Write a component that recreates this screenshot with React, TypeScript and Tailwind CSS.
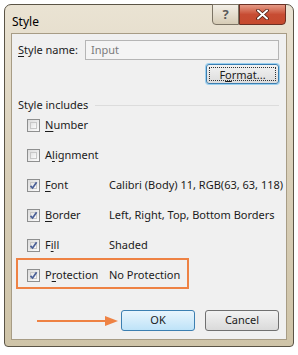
import React from "react";

const font = { fontFamily: '"Segoe UI", "Noto Sans", sans-serif' };

function Check({ checked }: { checked: boolean }) {
  return (
    <div className="w-[13px] h-[13px] border border-[#8e8f8f] bg-gradient-to-br from-[#dcdcdc] to-[#fbfbfb] p-[2px] shrink-0">
      <div className="w-full h-full border border-[#c8c8c8] bg-gradient-to-br from-[#e4e4e4] to-[#fafafa] flex items-center justify-center">
        {checked && (
          <svg width="9" height="9" viewBox="0 0 9 9" className="-m-[2px]">
            <path d="M1.5 4.8 L3.6 7 L7.6 1.2" fill="none" stroke="#4a5f97" strokeWidth="1.7" />
          </svg>
        )}
      </div>
    </div>
  );
}

function U({ children }: { children: React.ReactNode }) {
  return <span className="underline underline-offset-2">{children}</span>;
}

function Row({ checked, label, desc, boxed }: { checked: boolean; label: React.ReactNode; desc?: string; boxed?: boolean }) {
  return (
    <div className="relative h-[20px] flex items-center pl-[9px] whitespace-nowrap">
      {boxed && <div className="absolute left-[-2px] top-[-7px] w-[173px] h-[31px] border-2 border-[#ee8244]" />}
      <Check checked={checked} />
      <div className="w-[64px] ml-[5px] shrink-0">{label}</div>
      {desc && <div>{desc}</div>}
    </div>
  );
}

export default function App() {
  return (
    <div className="w-[298px] h-[355px] bg-white pt-[4px] pl-[4px] text-[11px] text-[#1b1b1b]" style={font}>
      <div className="w-[290px] h-[343px] rounded-t-[7px] rounded-b-[4px] border border-[#5b5446] bg-gradient-to-b from-[#eae3d3] via-[#d9cfb8] to-[#cfc4a8] flex flex-col px-[6px] pb-[6px]">
        <div className="h-[28px] flex items-start justify-between">
          <div className="pt-[9px] pl-[1px] text-[12px] text-black leading-[16px]">Style</div>
          <div className="flex mt-[-1px] mr-[1px]">
            <div className="w-[27px] h-[21px] border border-[#7c7465] rounded-bl-[4px] bg-gradient-to-b from-[#f3efe7] to-[#d6ccb6] flex items-center justify-center text-[#5a5a5a] font-bold text-[13px]">?</div>
            <div className="w-[47px] h-[21px] border border-[#6b3024] rounded-br-[4px] bg-gradient-to-b from-[#e59a86] via-[#c74c33] to-[#c64a2e] flex items-center justify-center">
              <svg width="13" height="11" viewBox="0 0 13 11">
                <path d="M2 1.5 L11 9.5 M11 1.5 L2 9.5" stroke="#4a1d14" strokeWidth="3.6" strokeLinecap="round" />
                <path d="M2 1.5 L11 9.5 M11 1.5 L2 9.5" stroke="#ffffff" strokeWidth="2" strokeLinecap="round" />
              </svg>
            </div>
          </div>
        </div>
        <div className="flex-1 border border-[#a79c85] bg-[#f0f0f0] flex flex-col pl-[6px] pr-[7px] pt-[6px]">
          <div className="flex items-center h-[20px]">
            <div className="w-[67px] whitespace-nowrap"><U>S</U>tyle name:</div>
            <div className="flex-1 h-[20px] border border-[#b5b5b5] bg-[#f4f4f4] flex items-center px-[5px] text-[#7b7b7b]">Input</div>
          </div>
          <div className="flex justify-end mt-[4px]">
            <div className="w-[73px] h-[20px] rounded-[3px] border border-[#3c7fb1] shadow-[0_0_0_1px_#9bd0f0] bg-gradient-to-b from-[#f2f2f2] to-[#dcdcdc] p-[2px]">
              <div className="w-full h-full border border-dotted border-[#333] flex items-center justify-center leading-none">
                F<U>o</U>rmat...
              </div>
            </div>
          </div>
          <div className="flex items-center mt-[13px] h-[16px]">
            <span className="whitespace-nowrap">Style includes</span>
            <div className="flex-1 ml-[7px] h-px bg-[#dcdcdc]" />
          </div>
          <div className="flex flex-col gap-[10px] mt-[2px]">
            <Row checked={false} label={<><U>N</U>umber</>} />
            <Row checked={false} label={<>A<U>l</U>ignment</>} />
            <Row checked={true} label={<><U>F</U>ont</>} desc="Calibri (Body) 11, RGB(63, 63, 118)" />
            <Row checked={true} label={<><U>B</U>order</>} desc="Left, Right, Top, Bottom Borders" />
            <Row checked={true} label={<>F<U>i</U>ll</>} desc="Shaded" />
            <Row checked={true} label={<>P<U>r</U>otection</>} desc="No Protection" boxed />
          </div>
          <div className="flex items-center justify-end mt-[25px]">
            <svg width="82" height="12" viewBox="0 0 82 12" className="mr-[2px]">
              <path d="M0 6 H72" stroke="#ee8244" strokeWidth="2" />
              <path d="M68 1 L81 6 L68 11 Z" fill="#ee8244" />
            </svg>
            <div className="w-[74px] h-[21px] rounded-[3px] border border-[#3c7fb1] bg-gradient-to-b from-[#e9f5fd] to-[#bee3f8] flex items-center justify-center">OK</div>
            <div className="w-[74px] h-[21px] ml-[10px] rounded-[3px] border border-[#707070] bg-gradient-to-b from-[#f2f2f2] to-[#dadada] flex items-center justify-center">Cancel</div>
          </div>
        </div>
      </div>
    </div>
  );
}
